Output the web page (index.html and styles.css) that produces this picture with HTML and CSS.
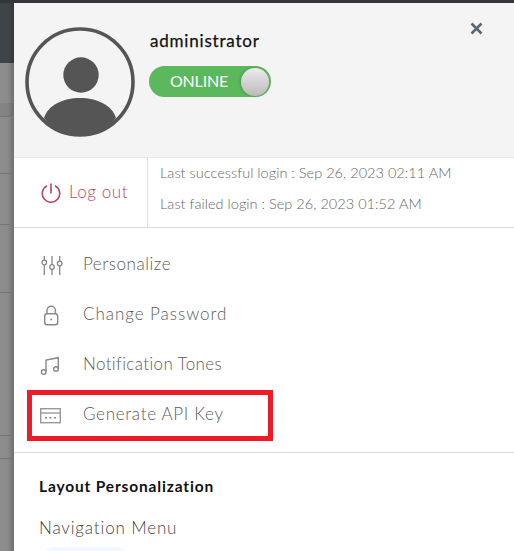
FILE: index.html
```html
<!DOCTYPE html>
<html lang="en">
<head>
<meta charset="utf-8">
<title>Profile</title>
<link rel="stylesheet" href="styles.css">
</head>
<body>
<div class="topbar"></div>
<div class="shell">
  <div class="backdrop">
    <div class="bd-head"></div>
    <div class="bd-row h1"></div>
    <div class="bd-row h2 tint"></div>
    <div class="bd-row h3"></div>
    <div class="bd-row h4"></div>
    <div class="bd-row h5"></div>
    <div class="bd-row h6"></div>
    <div class="bd-row h7"></div>
  </div>
  <aside class="panel">
    <header class="profile">
      <svg class="avatar" viewBox="0 0 110 110" width="110" height="110" aria-hidden="true">
        <circle cx="55" cy="55" r="53" fill="none" stroke="#555" stroke-width="3.6"/>
        <circle cx="56" cy="48" r="17.7" fill="#555"/>
        <path d="M19 91C23 78 38 71 55 71C72 71 87 78 91 91C82 103 69 109 55 109C41 109 28 103 19 91Z" fill="#555"/>
      </svg>
      <div class="who">
        <div class="name">administrator</div>
        <div class="toggle"><span class="toggle-text">ONLINE</span><span class="knob"></span></div>
      </div>
      <svg class="close" viewBox="0 0 13 13" width="13" height="13" aria-hidden="true"><path d="M1.500 1.500L11.500 11.500M11.500 1.500L1.500 11.500" stroke="#5d6770" stroke-width="2.600" fill="none"/></svg>
    </header>
    <section class="session">
      <div class="logout">
        <svg viewBox="0 0 20 20" width="20" height="20" aria-hidden="true"><path d="M6 2.800A8.700 8.700 0 1 0 14 2.800M10 .5V10.500" fill="none" stroke="#b8485e" stroke-width="1.600"/></svg>
        <span>Log out</span>
      </div>
      <div class="logins">
        <div>Last successful login : Sep 26, 2023 02:11 AM</div>
        <div>Last failed login : Sep 26, 2023 01:52 AM</div>
      </div>
    </section>
    <nav class="menu">
      <div class="item">
        <svg viewBox="0 0 24 24" width="24" height="24" aria-hidden="true"><g fill="none" stroke="#888" stroke-width="1.300"><path d="M5.300 3V7M5.300 12V22M13 3V11.500M13 16.500V22M20.700 3V8M20.700 13V22"/><circle cx="5.300" cy="9.500" r="2.300"/><circle cx="13" cy="14" r="2.300"/><circle cx="20.700" cy="10.500" r="2.300"/></g></svg>
        <span class="ls-a">Personalize</span>
      </div>
      <div class="item">
        <svg viewBox="0 0 24 24" width="24" height="24" aria-hidden="true"><g fill="none" stroke="#888" stroke-width="1.400"><rect x="5.700" y="10.700" width="13" height="11" rx="2.500"/><path d="M8 10.700V7.500a4.200 4.200 0 0 1 8.400 0V10.700"/></g><circle cx="12.200" cy="16.500" r="1" fill="#888"/></svg>
        <span class="ls-c">Change Password</span>
      </div>
      <div class="item">
        <svg viewBox="0 0 24 24" width="24" height="24" aria-hidden="true"><g fill="none" stroke="#888" stroke-width="1.400"><circle cx="4.700" cy="19" r="2.300"/><circle cx="17" cy="16" r="2.300"/><path d="M7 19V7L19.300 4.700V16"/></g></svg>
        <span class="ls-n">Notification Tones</span>
      </div>
      <div class="item highlighted">
        <svg viewBox="0 0 24 24" width="24" height="24" aria-hidden="true"><g fill="none" stroke="#999" stroke-width="1.400"><rect x="1.700" y="5.700" width="19.600" height="14"/><path d="M1.700 10H21.300"/></g><path d="M6 14.800H8M10.500 14.800H12.500M15 14.800H17" stroke="#888" stroke-width="1.500"/></svg>
        <span class="ls-g">Generate API Key</span>
      </div>
    </nav>
    <section class="layout">
      <h2>Layout Personalization</h2>
      <div class="sub">Navigation Menu</div>
      <div class="pill"></div>
    </section>
  </aside>
</div>
</body>
</html>
```
FILE: styles.css
```css
* { box-sizing: border-box; }
html, body { margin: 0; height: 100%; }
body {
  width: 514px;
  height: 551px;
  overflow: hidden;
  display: flex;
  flex-direction: column;
  background: #8c8c8c;
  font-family: "Lato", "Liberation Sans", sans-serif;
  font-weight: 300;
}
.topbar { flex: none; height: 3px; background: #33363a; }
.shell { flex: 1; min-height: 0; display: flex; }
.backdrop {
  flex: none;
  width: 14px;
  background: linear-gradient(90deg, #8e8e8e 0, #8a8a8a 8px, #6f6f6f 14px);
}
.bd-head { height: 60px; background: linear-gradient(90deg, #3f4448 0, #3f4448 8px, #33373a 14px); }
.bd-row { border-bottom: 1px solid #757575; }
.tint { background: rgba(0,0,0,.06); }
.h1 { height: 40px; border-bottom: 0; }
.h2 { height: 14px; }
.h3 { height: 57px; }
.h4 { height: 51px; }
.h5 { height: 68px; }
.h6 { height: 143px; }
.h7 { height: 23px; }
.panel {
  flex: 1;
  min-width: 0;
  background: #fff;
  display: flex;
  flex-direction: column;
  overflow: hidden;
}
.profile {
  flex: none;
  height: 155px;
  background: #f4f4f4;
  border-bottom: 1px solid #e8e8e8;
  display: flex;
  align-items: flex-start;
  padding: 24px 0 0 11px;
  position: relative;
}
.avatar { flex: none; }
.who { margin-left: 14px; padding-top: 4px; }
.name { padding-left: 1px; font-size: 17px; line-height: 20px; color: #111; font-weight: 400; letter-spacing: .8px; -webkit-text-stroke: .25px #111; }
.toggle {
  margin-top: 15px;
  width: 122px; height: 31px;
  border-radius: 16px;
  background: #5cb85c;
  display: flex;
  align-items: center;
  justify-content: space-between;
  padding: 0 2px 0 21px;
}
.toggle-text { color: #fff; font-size: 16px; font-weight: 400; letter-spacing: -.2px; padding-bottom: 2px; }
.knob {
  width: 28px; height: 28px; border-radius: 50%;
  background: linear-gradient(#ececec, #bdb9b9);
  box-shadow: -1px 0 3px rgba(0,0,0,.2);
}
.close { position: absolute; left: 456px; top: 19px; }
.session {
  flex: none;
  height: 70px;
  display: flex;
  border-bottom: 1px solid #dcdcdc;
}
.logout {
  width: 134px;
  border-right: 1px solid #e0e0e0;
  display: flex;
  align-items: center;
  gap: 8px;
  padding-left: 27px;
  color: #b8485e;
  font-size: 17px;
  letter-spacing: .55px;
}
.logout span { padding-bottom: 2px; }
.logins {
  margin-top: -1px;
  padding-left: 12px;
  font-size: 14.500px;
  line-height: 31px;
  color: #666;
  letter-spacing: .03px;
}
.menu {
  flex: none;
  display: flex;
  flex-direction: column;
  padding: 11px 0 13px 25px;
  border-bottom: 1px solid #dcdcdc;
}
.item {
  height: 50px;
  display: flex;
  align-items: center;
  gap: 20px;
  font-size: 17px;
  color: #5c5c5c;
  position: relative;
}
.item svg { margin-top: 2px; }
.item span { padding-bottom: 1px; }
.ls-a { letter-spacing: .55px; }
.ls-c { letter-spacing: .95px; }
.ls-n { letter-spacing: .37px; }
.ls-g { letter-spacing: .7px; }
.highlighted::after {
  content: "";
  position: absolute;
  left: -12px; top: 1px;
  width: 246px; height: 51px;
  box-sizing: border-box;
  border: 5px solid #ed1c24;
}
.layout { flex: none; padding: 23px 0 0 25px; }
.layout h2 { margin: 0; font-size: 15.500px; line-height: 20px; color: #111; font-weight: 700; letter-spacing: .85px; }
.sub { margin-top: 22px; font-size: 17px; line-height: 20px; color: #444; letter-spacing: .85px; }
.pill { margin-top: 9px; margin-left: 3px; width: 86px; height: 24px; border-radius: 12px; background: #f0f8ff; }
```
